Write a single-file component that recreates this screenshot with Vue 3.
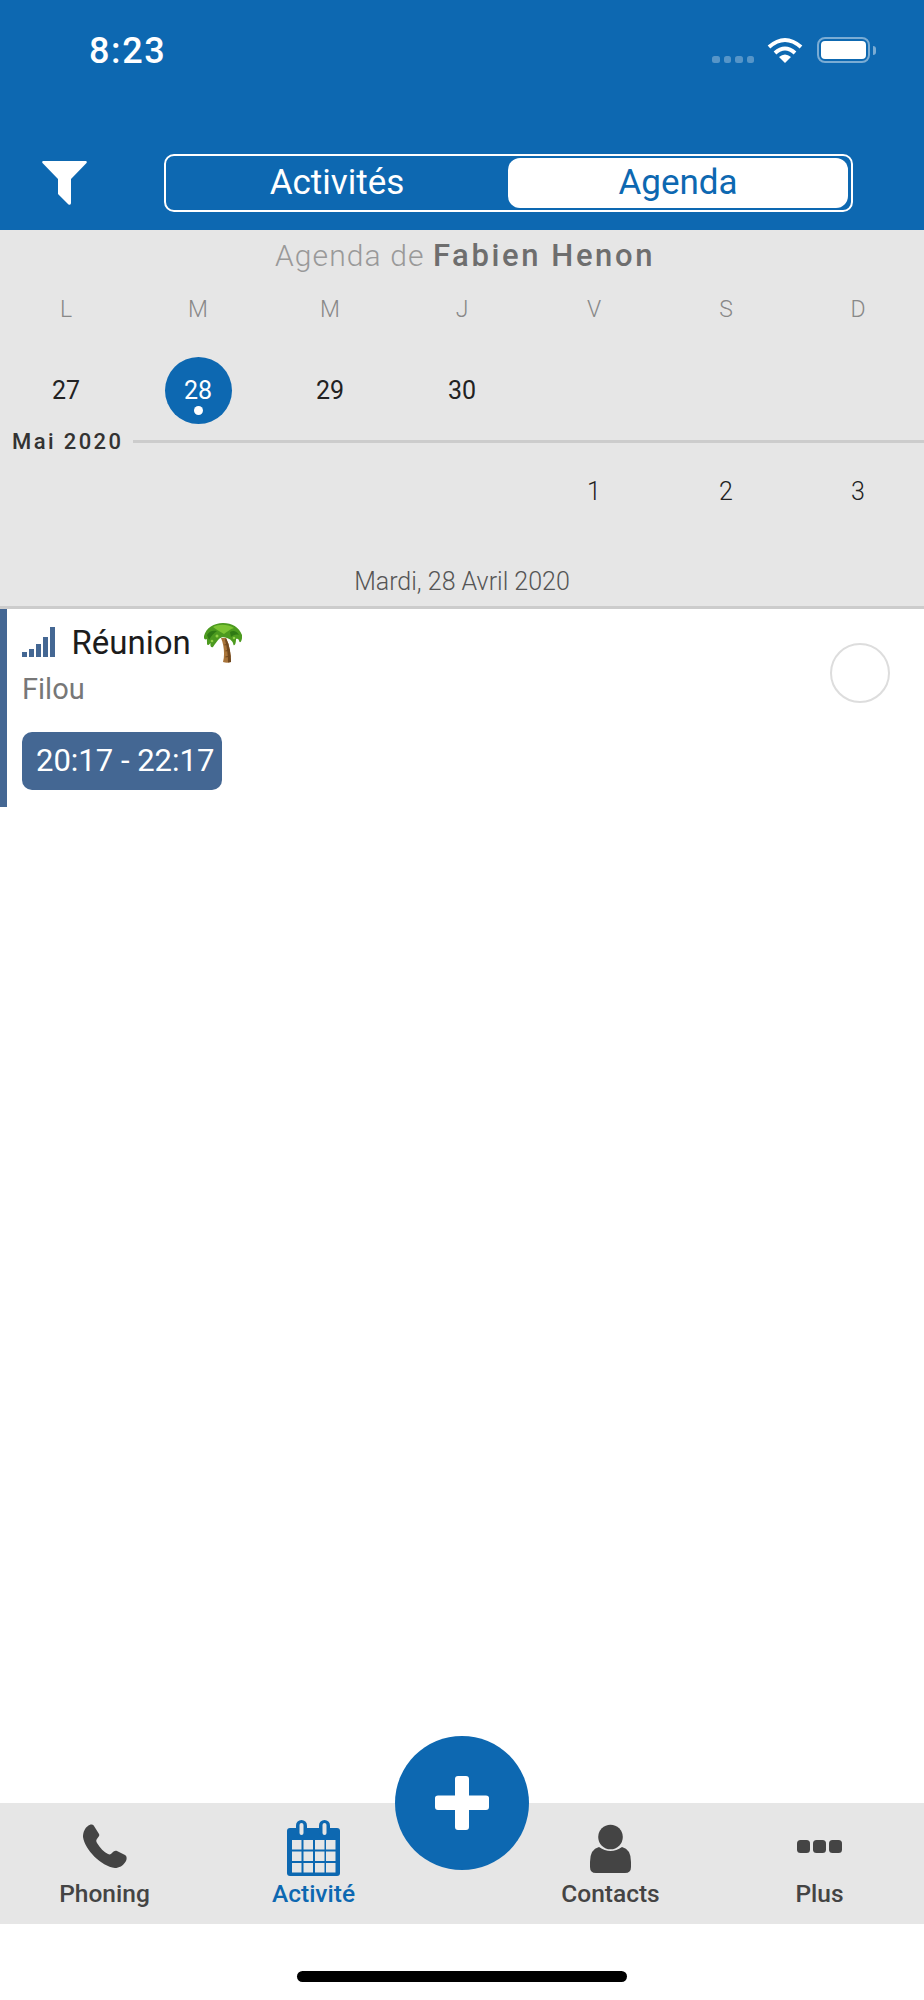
<template>
  <div class="page">
    <header class="header">
      <div class="status">
        <span class="time">8:23</span>
        <div class="status-icons">
          <div class="signal"><i v-for="n in 4" :key="n"></i></div>
          <svg class="wifi" viewBox="0 0 36 26">
            <path d="M2 10 Q18 -4 34 10" fill="none" stroke="#fff" stroke-width="4" />
            <path d="M8 16 Q18 7 28 16" fill="none" stroke="#fff" stroke-width="4" />
            <path d="M18 26 L12 20 Q18 15 24 20 Z" fill="#fff" />
          </svg>
          <div class="battery"><div class="battery-fill"></div></div>
          <div class="battery-nub"></div>
        </div>
      </div>
      <div class="nav">
        <svg class="filter" viewBox="0 0 45 44">
          <path d="M1.5 0 H43.5 Q45.5 0 44.5 2 L29 18 V42 Q29 44.5 26.5 43.5 L16 33 V18 L.5 2 Q-.5 0 1.5 0 Z" fill="#fff" />
        </svg>
        <div class="segment">
          <div class="segment-item">Activités</div>
          <div class="segment-item active">Agenda</div>
        </div>
      </div>
    </header>

    <section class="calendar">
      <div class="cal-title">Agenda de <b>Fabien Henon</b></div>
      <div class="week weekdays">
        <span v-for="(d, i) in weekdays" :key="i">{{ d }}</span>
      </div>
      <div class="week days first">
        <span v-for="(d, i) in firstWeek" :key="i" class="day" :class="{ today: d === 28 }">
          {{ d }}<i v-if="d === 28" class="dot"></i>
        </span>
      </div>
      <div class="month">
        <span class="month-label">Mai 2020</span>
        <span class="month-line"></span>
      </div>
      <div class="week days second">
        <span v-for="(d, i) in secondWeek" :key="i" class="day">{{ d }}</span>
      </div>
      <div class="cal-date">Mardi, 28 Avril 2020</div>
    </section>

    <main class="content">
      <article class="activity">
        <div class="activity-main">
          <div class="activity-title">
            <div class="level"><i v-for="h in levels" :key="h" :style="{ height: h + 'px' }"></i></div>
            <span class="activity-name">Réunion</span>
            <svg class="palm" viewBox="0 0 38 40">
              <path d="M17 15 C20 22 21 32 19 39 Q23 40.500 27 39 C27 30 25 21 22 15 Z" fill="#a8743a" />
              <path d="M21 17 C23 24 24 32 24 39.500 L27 39 C27 30 25 21 22 15 Z" fill="#70481f" />
              <path d="M20.500 22 L24.500 21 M21.500 28 L26 27 M21.500 34 L26.500 33" stroke="#70481f" stroke-width="1.200" />
              <path d="M0 13 C2 5 10 0 19 0 C28 0 35 4 38 12 C38.500 16 37 20 35.500 19 C35 16 33.500 15 32 16 C32 20 31 23 29.500 22 C29 18 26 16 23 15 C20 14 17 14 15 16 C13 18 11 21 9 24 C7 25 6 23 6.500 20 C5 22 3.500 23 3 21 C3 18 3 16 2.500 16 C1 17 -.5 16 0 13 Z" fill="#4c9a1f" />
              <path d="M9 4 C14 1 24 1 30 5 C26 6 23 9 20 11 C16 9 12 6 9 4 Z" fill="#7cc434" />
              <path d="M3 12 C5 8 9 7 13 8 C10 10 7 13 5 17 Z" fill="#2f7a14" />
              <path d="M26 9 C29 7 33 8 35 12 C32 11 29 12 27 14 Z" fill="#2f7a14" />
              <circle cx="13" cy="13" r="1.500" fill="#8fd045" />
              <circle cx="8" cy="18" r="1.300" fill="#8fd045" />
              <circle cx="30" cy="15" r="1.300" fill="#8fd045" />
            </svg>
          </div>
          <div class="activity-sub">Filou</div>
          <div class="activity-time">20:17 - 22:17</div>
        </div>
        <div class="check"></div>
      </article>
    </main>

    <nav class="tabbar">
      <div class="tab">
        <div class="tab-slot">
          <svg class="icon-phone" width="44" height="44" viewBox="0 0 44 44">
            <path d="M5 2 C7 0 10 0 11 2 L16 10 C17 12 15 13 14 15 C13 16 13 17 14 19 C17 24 21 28 25 30 C27 31 28 30 29 29 C30 28 32 26 34 27 L42 31 C44 32 44 35 43 37 C40 42 36 44 32 44 C18 42 2 26 0 13 C0 8 2 4 5 2 Z" fill="#444" />
          </svg>
        </div>
        <span>Phoning</span>
      </div>
      <div class="tab selected">
        <div class="tab-slot">
          <svg class="icon-cal" width="53" height="56" viewBox="0 0 53 56">
            <path d="M3 8 H50 Q53 8 53 11 V53 Q53 56 50 56 H3 Q0 56 0 53 V11 Q0 8 3 8 Z" fill="#0d68b1" />
            <rect x="9" y="0" width="11" height="17" rx="5.500" fill="#0d68b1" />
            <rect x="32" y="0" width="11" height="17" rx="5.500" fill="#0d68b1" />
            <rect x="12.500" y="3" width="4" height="12" rx="2" fill="#e6e6e6" />
            <rect x="35.500" y="3" width="4" height="12" rx="2" fill="#e6e6e6" />
            <rect v-for="c in calCells" :key="c.x + '-' + c.y" :x="c.x" :y="c.y" width="9.500" height="9.500" fill="#e6e6e6" />
          </svg>
        </div>
        <span>Activité</span>
      </div>
      <div></div>
      <div class="tab">
        <div class="tab-slot">
          <svg class="icon-person" width="41" height="49" viewBox="0 0 41 49">
            <circle cx="20.500" cy="13" r="12.300" fill="#444" />
            <path d="M9 23 Q20.500 31 32 23 Q41 25 41 38 V43 Q41 49 35 49 H6 Q0 49 0 43 V38 Q0 25 9 23 Z" fill="#444" />
          </svg>
        </div>
        <span>Contacts</span>
      </div>
      <div class="tab">
        <div class="tab-slot">
          <div class="dots"><i v-for="n in 3" :key="n"></i></div>
        </div>
        <span>Plus</span>
      </div>
      <button class="fab">
        <svg width="54" height="54" viewBox="0 0 54 54">
          <path d="M20 3 Q20 0 23 0 H31 Q34 0 34 3 V19.500 H51 Q54 19.500 54 22 V31 Q54 34 51 34 H34 V51 Q34 54 31 54 H23 Q20 54 20 51 V34 H3 Q0 34 0 31 V22 Q0 19.500 3 19.500 H20 Z" fill="#fff" />
        </svg>
      </button>
    </nav>

    <div class="home-area"><div class="home-bar"></div></div>
  </div>
</template>

<script setup>
const weekdays = ['L', 'M', 'M', 'J', 'V', 'S', 'D']
const firstWeek = [27, 28, 29, 30, '', '', '']
const secondWeek = ['', '', '', '', 1, 2, 3]
const levels = [5, 8, 13, 20, 30]

const calCells = []
for (const y of [20, 31.5, 43]) {
  for (const x of [5, 16.5, 28, 39]) calCells.push({ x, y })
}
</script>

<style>
html, body { margin: 0; background: #fff; }
</style>

<style scoped>
.page {
  width: 924px;
  height: 2000px;
  display: flex;
  flex-direction: column;
  font-family: Roboto, "Liberation Sans", sans-serif;
  overflow: hidden;
}

.header {
  background: #0d68b1;
  height: 230px;
  box-sizing: border-box;
  color: #fff;
}
.status {
  height: 154px;
  box-sizing: border-box;
  padding: 30px 0 0 89px;
  display: flex;
  align-items: flex-start;
  justify-content: space-between;
}
.time {
  font-size: 36px;
  line-height: 42px;
  letter-spacing: 1.600px;
  font-weight: 500;
}
.status-icons {
  display: flex;
  margin: 7px 48px 0 0;
  align-items: flex-start;
}
.signal {
  display: flex;
  gap: 4px;
  margin: 19px 13px 0 0;
}
.signal i {
  width: 7.500px;
  height: 7px;
  border-radius: 2.500px;
  background: rgba(255, 255, 255, .3);
}
.wifi {
  width: 36px;
  height: 26px;
  margin-right: 14px;
}
.battery {
  width: 53px;
  height: 26px;
  box-sizing: border-box;
  border: 2px solid rgba(255, 255, 255, .45);
  border-radius: 8px;
  padding: 2px;
}
.battery-fill {
  height: 100%;
  background: #fff;
  border-radius: 4px;
}
.battery-nub {
  width: 3px;
  height: 9px;
  margin: 9px 0 0 3px;
  background: rgba(255, 255, 255, .45);
  border-radius: 0 3px 3px 0;
}

.nav {
  display: flex;
  align-items: flex-start;
  padding-left: 42px;
}
.filter {
  width: 45px;
  height: 44px;
  margin: 7px 77px 0 0;
}
.segment {
  width: 689px;
  height: 58px;
  box-sizing: border-box;
  border: 2px solid #fff;
  border-radius: 10px;
  padding: 2px 3px 2px 0;
  display: flex;
}
.segment-item {
  flex: 1;
  text-align: center;
  font-size: 35px;
  line-height: 50px;
  margin-top: 0;
}
.segment-item.active {
  flex: none;
  width: 340px;
  background: #fff;
  color: #0d68b1;
  border-radius: 12px;
}

.calendar {
  background: #e6e6e6;
  height: 379px;
  box-sizing: border-box;
  border-bottom: 3px solid #ccc;
}
.cal-title {
  height: 50px;
  padding-left: 6px;
  text-align: center;
  font-size: 30px;
  line-height: 52px;
  font-weight: 300;
  letter-spacing: 1.100px;
  color: #999;
  white-space: nowrap;
}
.cal-title b {
  font-size: 31px;
  font-weight: 500;
  color: #6e6e6e;
  letter-spacing: 2.600px;
}
.week {
  display: grid;
  grid-template-columns: repeat(7, 1fr);
  text-align: center;
  align-items: center;
  justify-items: center;
}
.weekdays {
  height: 60px;
  box-sizing: border-box;
  padding-bottom: 2px;
  font-size: 23px;
  font-weight: 300;
  color: #888;
}
.days {
  font-size: 25px;
  color: #222;
}
.days.first { height: 100px; }
.days.second { height: 98px; font-weight: 300; }
.day {
  position: relative;
  width: 67px;
  height: 67px;
  display: flex;
  align-items: center;
  justify-content: center;
}
.day.today {
  background: #0d68b1;
  color: #fff;
  border-radius: 50%;
}
.dot {
  position: absolute;
  left: 29px;
  bottom: 9px;
  width: 9px;
  height: 9px;
  border-radius: 50%;
  background: #fff;
}
.month {
  height: 2px;
  display: flex;
  align-items: center;
  padding-left: 12px;
}
.month-label {
  font-size: 22px;
  font-weight: 500;
  letter-spacing: 2.400px;
  color: #333;
  white-space: nowrap;
}
.month-line {
  flex: 1;
  height: 3px;
  flex-shrink: 0;
  margin-left: 10px;
  background: #ccc;
}
.cal-date {
  margin-top: 25px;
  text-align: center;
  font-size: 25px;
  line-height: 34px;
  font-weight: 300;
  color: #555;
}

.content {
  flex: 1;
}
.activity {
  height: 198px;
  box-sizing: border-box;
  border-left: 7px solid #446793;
  display: flex;
  justify-content: space-between;
  padding: 11px 34px 0 15px;
}
.activity-title {
  display: flex;
  align-items: flex-start;
  height: 46px;
}
.level {
  display: flex;
  align-items: flex-end;
  gap: 2.500px;
  height: 30px;
  margin-top: 7px;
}
.level i {
  width: 4.500px;
  background: #446793;
}
.activity-name {
  margin-left: 17px;
  margin-top: 1px;
  font-size: 33px;
  line-height: 44px;
  color: #1c1c1c;
}
.palm {
  width: 38px;
  height: 40px;
  margin-left: 13px;
  margin-top: 3px;
}
.activity-sub {
  font-size: 29px;
  line-height: 44px;
  margin-top: 1px;
  color: #777;
}
.activity-time {
  margin-top: 21px;
  width: 200px;
  height: 58px;
  box-sizing: border-box;
  padding-left: 14px;
  border-radius: 10px;
  background: #446793;
  color: #fff;
  font-size: 31px;
  line-height: 58px;
  white-space: nowrap;
}
.check {
  width: 60px;
  height: 60px;
  box-sizing: border-box;
  border: 2px solid #ddd;
  border-radius: 50%;
  margin-top: 23px;
}

.tabbar {
  position: relative;
  height: 121px;
  background: #e6e6e6;
  display: grid;
  grid-template-columns: 1fr 1fr 88px 1fr 1fr;
}
.tab {
  display: flex;
  flex-direction: column;
  align-items: center;
  font-size: 24.500px;
  line-height: 30px;
  font-weight: 500;
  color: #444;
}
.tab.selected { color: #0d68b1; }
.tab-slot {
  height: 76px;
}
.tab-slot svg { display: block; }
.icon-phone { margin-top: 21px; }
.icon-cal { margin-top: 17px; }
.icon-person { margin-top: 21px; }
.dots {
  display: flex;
  gap: 3px;
  margin-top: 37px;
}
.dots i {
  width: 13px;
  height: 13px;
  border-radius: 3.500px;
  background: #444;
}
.fab {
  position: absolute;
  left: 395px;
  top: -67px;
  width: 134px;
  height: 134px;
  padding: 0;
  border: 0;
  border-radius: 50%;
  background: #0d68b1;
  display: flex;
  align-items: center;
  justify-content: center;
}
.home-area {
  height: 76px;
  padding-top: 47px;
  box-sizing: border-box;
}
.home-bar {
  width: 330px;
  height: 11px;
  margin: 0 auto;
  border-radius: 6px;
  background: #000;
}
</style>
